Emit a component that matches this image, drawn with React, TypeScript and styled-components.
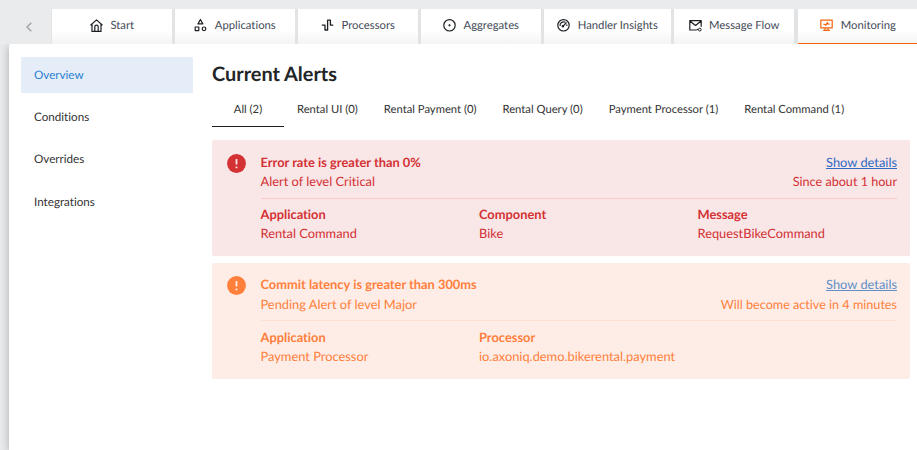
import React from "react";
import styled, { createGlobalStyle } from "styled-components";

const GlobalStyle = createGlobalStyle`
  * { box-sizing: border-box; }
  body {
    margin: 0;
    overflow: hidden;
    background: #e9ebed;
    font-family: Lato, "Open Sans", sans-serif;
    font-variant-ligatures: none;
    text-rendering: geometricPrecision;
  }
  button { font-variant-ligatures: none; text-rendering: geometricPrecision; }
`;

const Shell = styled.div`
  width: 917px;
  height: 450px;
  display: flex;
  flex-direction: column;
  overflow: hidden;
  background: #e9ebed;
`;

const TabBar = styled.nav`
  display: flex;
  flex: 0 0 44px;
  padding-top: 9px;
`;

const BackButton = styled.button`
  width: 51px;
  flex: none;
  border: 0;
  padding: 1px 0 0 26px;
  display: flex;
  align-items: center;
  background: none;
`;

const TabStrip = styled.div`
  display: flex;
  gap: 3px;
  flex: none;
  padding: 0 3px 0 1px;
  background: #e2e3e5;
`;

const Tab = styled.button<{ $width: number; $active?: boolean }>`
  width: ${(p) => p.$width}px;
  margin-left: ${(p) => (p.$active ? 1 : 0)}px;
  flex: none;
  height: 35px;
  display: flex;
  align-items: center;
  justify-content: center;
  gap: 7.5px;
  padding: 0 0 2px;
  border: 0;
  box-shadow: ${(p) => (p.$active ? "inset 0 -1px #f4640c" : "none")};
  background: linear-gradient(#fff 60%, #f4f4f5);
  color: #434a57;
  font-family: Lato, sans-serif;
  font-size: 11.3px;
  line-height: 16px;
  white-space: nowrap;
`;

const Icon = styled.svg<{ $color?: string }>`
  flex: none;
  overflow: visible;
  fill: none;
  stroke: ${(p) => p.$color ?? "#1d2023"};
  stroke-width: 1.2;
  stroke-linejoin: round;
`;

const Chevron = styled(Icon)`
  stroke-width: 1.6;
`;

const Panel = styled.main`
  flex: 1;
  margin-left: 9px;
  padding: 13px 7px 0 12px;
  display: flex;
  gap: 19px;
  border-top-left-radius: 2px;
  background: #fff;
  box-shadow: 0 2px 10px rgba(0, 0, 0, 0.28);
  clip-path: inset(0 0 0 -9px);
`;

const SideNav = styled.nav`
  width: 172px;
  flex: none;
  display: flex;
  flex-direction: column;
  gap: 6.2px;
`;

const SideItem = styled.a<{ $active?: boolean }>`
  height: 36px;
  padding: 1px 13px 0;
  display: flex;
  align-items: center;
  font-size: 11.65px;
  line-height: 16px;
  color: ${(p) => (p.$active ? "#2a7fd3" : "#333")};
  background: ${(p) => (p.$active ? "#e5edf9" : "transparent")};

  &:last-child {
    margin-top: 0.6px;
  }
`;

const Content = styled.section`
  width: 698px;
  flex: none;
`;

const Title = styled.h1`
  margin: 5px 0 0;
  font-size: 19.9px;
  line-height: 24px;
  font-weight: 700;
  color: #222527;
`;

const Filters = styled.div`
  display: flex;
  height: 36px;
  margin: 5px 0 13px;
`;

const Filter = styled.button<{ $active?: boolean }>`
  min-width: ${(p) => (p.$active ? "72px" : "0")};
  padding: 1px 13px 0;
  border: 0;
  border-bottom: 1px solid ${(p) => (p.$active ? "#222" : "transparent")};
  background: none;
  color: #333;
  font-family: Lato, sans-serif;
  font-size: 11.25px;
  line-height: 35px;
  white-space: nowrap;
`;

const Alerts = styled.div`
  display: flex;
  flex-direction: column;
  gap: 7px;
`;

const Alert = styled.article<{ $tone: Tone }>`
  height: 116px;
  padding: 13px 13px 0 14.5px;
  display: flex;
  gap: 15px;
  border-radius: 2px;
  font-size: 12.85px;
  line-height: 19.3px;
  color: ${(p) => tones[p.$tone].text};
  background: ${(p) => tones[p.$tone].background};
`;

const AlertIcon = styled.svg<{ $tone: Tone }>`
  flex: none;
  margin-top: ${(p) => (p.$tone === "critical" ? 1 : 0)}px;
  fill: ${(p) => tones[p.$tone].text};
`;

const AlertBody = styled.div`
  flex: 1;
`;

const AlertHeader = styled.header<{ $tone: Tone }>`
  display: flex;
  justify-content: space-between;
  height: ${(p) => (p.$tone === "critical" ? 46 : 45)}px;
  border-bottom: 1px solid ${(p) => tones[p.$tone].line};
`;

const TextStack = styled.div<{ $end?: boolean; $loose?: boolean }>`
  display: flex;
  flex-direction: column;
  align-items: ${(p) => (p.$end ? "flex-end" : "flex-start")};
  gap: ${(p) => (p.$loose ? 1 : 0)}px;
  margin-top: ${(p) => (p.$loose ? -1 : 0)}px;
`;

const Strong = styled.strong`
  font-weight: 700;
`;

const Timing = styled.span`
  font-size: 12.62px;
`;

const DetailsLink = styled.a<{ $tone: Tone }>`
  color: ${(p) => tones[p.$tone].link};
  text-decoration: underline;
`;

const Facts = styled.div<{ $tone: Tone }>`
  padding-top: ${(p) => (p.$tone === "critical" ? 6 : 7)}px;
  display: grid;
  grid-template-columns: repeat(3, 199.5px);
  column-gap: 19px;
`;

type Tone = "critical" | "major";

const tones = {
  critical: { text: "#d33134", background: "#f9e6e7", line: "#f8cacb", link: "#2e6ac2" },
  major: { text: "#ff7f3b", background: "#feede6", line: "#ffdfcd", link: "#608fc8" },
};

const icons: Record<string, React.ReactNode> = {
  home: (
    <>
      <path d="M.5 6.2 6.5.9l6 5.3M2 5.3v7.1h9V5.3" />
      <path d="M4.8 12.2V7.8a1.7 1.7 0 0 1 3.4 0v4.4" />
    </>
  ),
  apps: (
    <>
      <path d="M6.4.5 8.8 4.9H4z" />
      <path d="M1.2 8h3.6v3.6H1.2z" />
      <circle cx="10" cy="9.8" r="1.8" />
    </>
  ),
  processors: <path d="M.8 6.2H4V11h2.6V1.2h2.8v5h2.9" strokeWidth="1.3" />,
  aggregates: (
    <>
      <circle cx="6.5" cy="6.3" r="5.7" />
      <circle cx="6.5" cy="6.3" r=".5" fill="#1d2023" />
    </>
  ),
  gauge: (
    <>
      <circle cx="6.5" cy="6.3" r="5.7" />
      <path d="M3.1 7a3.5 3.5 0 0 1 5.2-3.7M9.8 5.4V7M5.9 7.4l3.6-3.9" />
      <circle cx="5.9" cy="7.2" r=".7" />
    </>
  ),
  mail: (
    <>
      <path d="M7.8 11H.8V1.6h11.4v6.1M.9 2l5.6 4.5L12.1 2" />
      <path d="M7.7 10.5h1.4" />
      <circle cx="10.8" cy="10.6" r="1.4" strokeWidth="1" />
    </>
  ),
  monitor: (
    <>
      <path d="M.8 1.2h11.4v7.7H.8zM3.2 11.4h6.6M5 9.1v2M8 9.1v2" />
      <path d="M3.4 5.3h1.7l.8 1 1.4-2.8.7 1.7h1.6" />
    </>
  ),
};

const tabs = [
  { label: "Start", icon: "home", width: 120 },
  { label: "Applications", icon: "apps", width: 120 },
  { label: "Processors", icon: "processors", width: 120 },
  { label: "Aggregates", icon: "aggregates", width: 120 },
  { label: "Handler Insights", icon: "gauge", width: 127 },
  { label: "Message Flow", icon: "mail", width: 120 },
  { label: "Monitoring", icon: "monitor", width: 120, active: true },
];

const filters = ["All (2)", "Rental UI (0)", "Rental Payment (0)", "Rental Query (0)", "Payment Processor (1)", "Rental Command (1)"];

const alerts: { tone: Tone; title: string; level: string; timing: string; facts: string[][] }[] = [
  {
    tone: "critical",
    title: "Error rate is greater than 0%",
    level: "Alert of level Critical",
    timing: "Since about 1 hour",
    facts: [["Application", "Rental Command"], ["Component", "Bike"], ["Message", "RequestBikeCommand"]],
  },
  {
    tone: "major",
    title: "Commit latency is greater than 300ms",
    level: "Pending Alert of level Major",
    timing: "Will become active in 4 minutes",
    facts: [["Application", "Payment Processor"], ["Processor", "io.axoniq.demo.bikerental.payment"]],
  },
];

export default function App() {
  return (
    <Shell>
      <GlobalStyle />
      <TabBar>
        <BackButton aria-label="Previous tabs">
          <Chevron $color="#a5a8aa" width="6" height="10" viewBox="0 0 6 10">
            <path d="M5.3.8 1 5l4.3 4.2" />
          </Chevron>
        </BackButton>
        <TabStrip>
          {tabs.map((t) => (
            <Tab key={t.label} $width={t.width} $active={t.active}>
              <Icon $color={t.active ? "#f4640c" : undefined} width="13" height="13" viewBox="0 0 13 13">
                {icons[t.icon]}
              </Icon>
              {t.label}
            </Tab>
          ))}
        </TabStrip>
      </TabBar>
      <Panel>
        <SideNav>
          {["Overview", "Conditions", "Overrides", "Integrations"].map((item, i) => (
            <SideItem key={item} $active={i === 0}>{item}</SideItem>
          ))}
        </SideNav>
        <Content>
          <Title>Current Alerts</Title>
          <Filters>
            {filters.map((f, i) => (
              <Filter key={f} $active={i === 0}>{f}</Filter>
            ))}
          </Filters>
          <Alerts>
            {alerts.map((a) => (
              <Alert key={a.title} $tone={a.tone}>
                <AlertIcon $tone={a.tone} width="19" height="19" viewBox="0 0 19 19">
                  <circle cx="9.5" cy="9.5" r="9.4" />
                  <path d="M9.5 5v5.4M9.5 12.4v1.8" stroke={tones[a.tone].background} strokeWidth="1.8" />
                </AlertIcon>
                <AlertBody>
                  <AlertHeader $tone={a.tone}>
                    <TextStack $loose={a.tone === "major"}>
                      <Strong>{a.title}</Strong>
                      <span>{a.level}</span>
                    </TextStack>
                    <TextStack $end $loose={a.tone === "major"}>
                      <DetailsLink $tone={a.tone}>Show details</DetailsLink>
                      <Timing>{a.timing}</Timing>
                    </TextStack>
                  </AlertHeader>
                  <Facts $tone={a.tone}>
                    {a.facts.map(([name, value]) => (
                      <TextStack key={name}>
                        <Strong>{name}</Strong>
                        <span>{value}</span>
                      </TextStack>
                    ))}
                  </Facts>
                </AlertBody>
              </Alert>
            ))}
          </Alerts>
        </Content>
      </Panel>
    </Shell>
  );
}
